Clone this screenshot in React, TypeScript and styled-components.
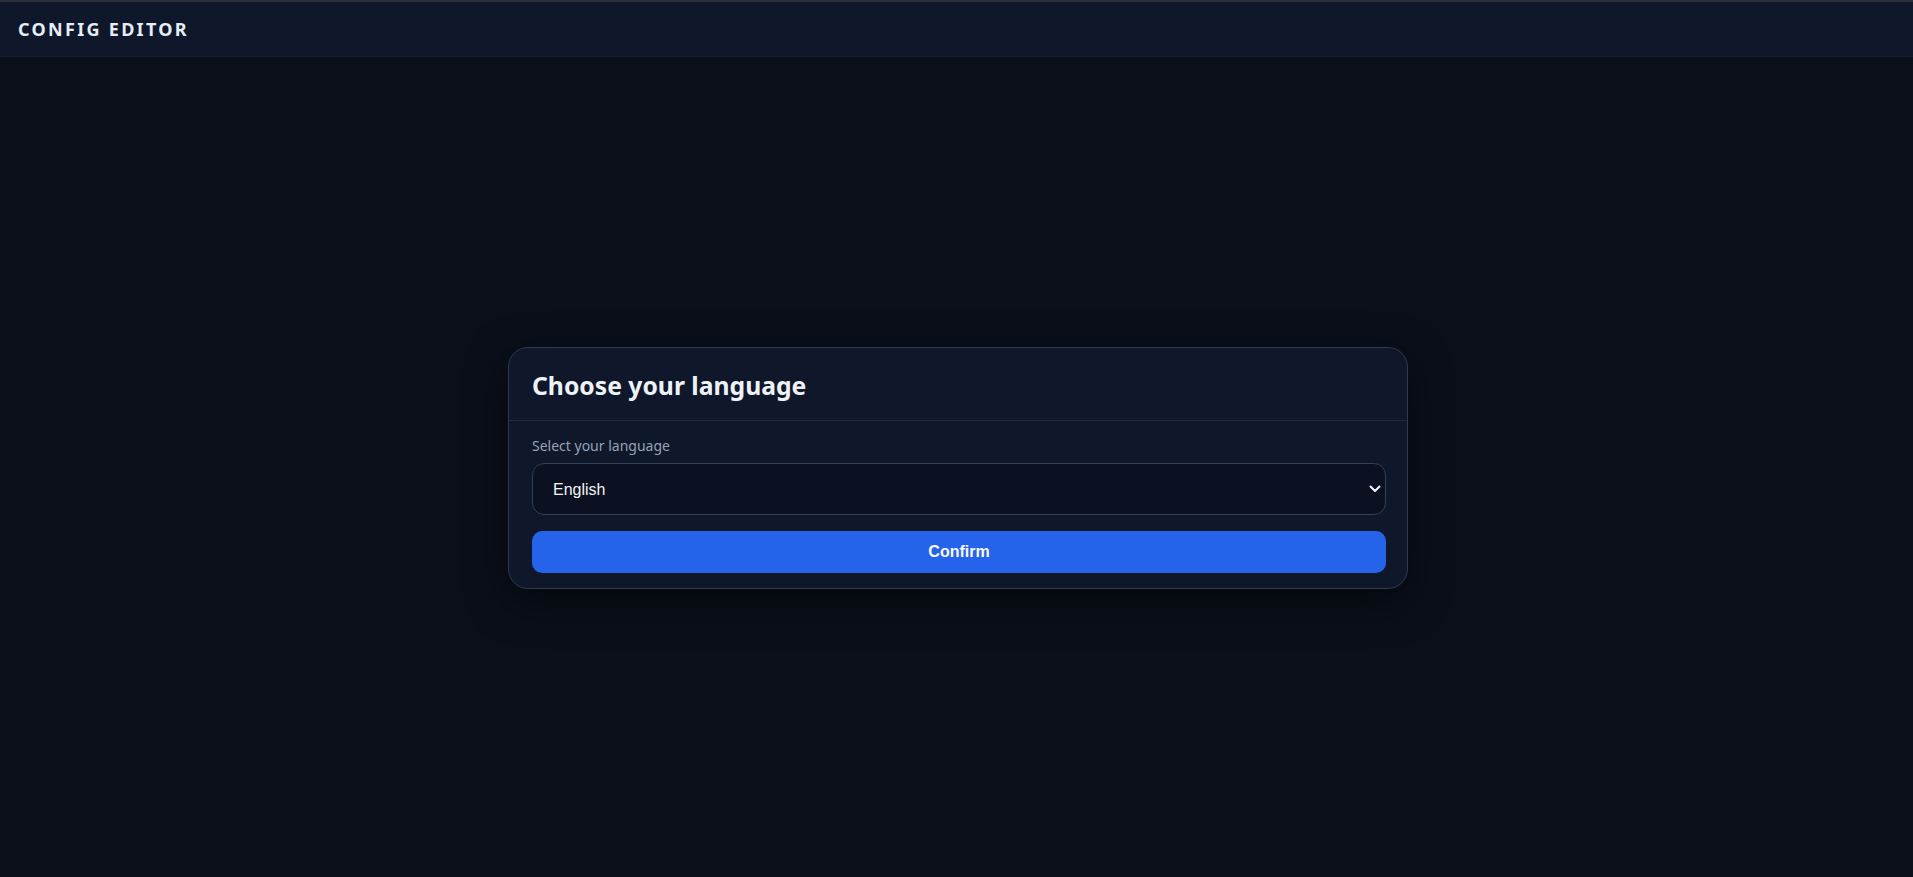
import React, { useState } from "react";
import styled, { createGlobalStyle } from "styled-components";

const GlobalStyle = createGlobalStyle`
  * { box-sizing: border-box; }
  html, body { margin: 0; padding: 0; background: #0a0f1a; }
  body { font-family: "Noto Sans", "Open Sans", sans-serif; color: #e2e8f0; }
`;

const Page = styled.div`
  min-height: 100vh;
  display: flex;
  flex-direction: column;
  background: #0a0f1a;
  border-top: 2px solid #2a2e36;
`;

const TopBar = styled.header`
  height: 55px;
  display: flex;
  align-items: center;
  padding: 0 18px;
  background: #0f172a;
  border-bottom: 1px solid #151d2e;
`;

const Brand = styled.h1`
  margin: 0;
  font-family: "Noto Sans", sans-serif;
  font-size: 18px;
  font-weight: 700;
  letter-spacing: 2.3px;
  color: #e6edf5;
`;

const Main = styled.main`
  flex: 1;
  display: flex;
  align-items: center;
  justify-content: center;
  padding: 2px 0 0 3px;
`;

const Card = styled.section`
  width: 900px;
  background: #0f172a;
  border: 1px solid #2f3b50;
  border-radius: 20px;
  box-shadow: 0 12px 40px rgba(0, 0, 0, 0.55);
  overflow: hidden;
`;

const CardHeader = styled.div`
  padding: 23px 23px 19px;
  border-bottom: 1px solid #1f2a3d;
`;

const Title = styled.h2`
  margin: 0;
  font-family: "Noto Sans", sans-serif;
  font-size: 24.7px;
  line-height: 30px;
  font-weight: 700;
  color: #eef2f7;
`;

const CardBody = styled.div`
  display: flex;
  flex-direction: column;
  padding: 16px 18px 15px 18px;
`;

const Label = styled.label`
  font-family: "Noto Sans", sans-serif;
  font-size: 14px;
  line-height: 18px;
  color: #94a3b8;
  margin: 0 0 8px 5px;
`;

const SelectWrap = styled.div`
  position: relative;
  margin: 0 3px 0 5px;
`;

const Select = styled.select`
  appearance: none;
  -webkit-appearance: none;
  width: 100%;
  height: 52px;
  padding: 0 40px 0 20px;
  background: #0b1120;
  color: #f1f5f9;
  border: 1px solid #334155;
  border-radius: 12px;
  font-family: "Liberation Sans", Arial, sans-serif;
  font-size: 16px;
  outline: none;
`;

const Chevron = styled.svg`
  position: absolute;
  right: 5px;
  top: 50%;
  width: 12px;
  height: 8px;
  transform: translateY(-50%);
  pointer-events: none;
`;

const ConfirmButton = styled.button`
  margin: 16px 3px 0 5px;
  height: 42px;
  border: none;
  border-radius: 10px;
  background: #2563eb;
  color: #f8fafc;
  font-family: "Liberation Sans", Arial, sans-serif;
  font-size: 16px;
  font-weight: 700;
  cursor: pointer;
`;

export default function App() {
  const [lang, setLang] = useState("en");
  return (
    <>
      <GlobalStyle />
      <Page>
        <TopBar>
          <Brand>CONFIG EDITOR</Brand>
        </TopBar>
        <Main>
          <Card>
            <CardHeader>
              <Title>Choose your language</Title>
            </CardHeader>
            <CardBody>
              <Label htmlFor="lang">Select your language</Label>
              <SelectWrap>
                <Select id="lang" value={lang} onChange={(e) => setLang(e.target.value)}>
                  <option value="en">English</option>
                  <option value="fr">Français</option>
                  <option value="de">Deutsch</option>
                  <option value="es">Español</option>
                </Select>
                <Chevron viewBox="0 0 12 8" fill="none">
                  <path d="M1.5 1.5 L6 6 L10.5 1.5" stroke="#f1f5f9" strokeWidth="2" strokeLinecap="round" strokeLinejoin="round" />
                </Chevron>
              </SelectWrap>
              <ConfirmButton type="button">Confirm</ConfirmButton>
            </CardBody>
          </Card>
        </Main>
      </Page>
    </>
  );
}
